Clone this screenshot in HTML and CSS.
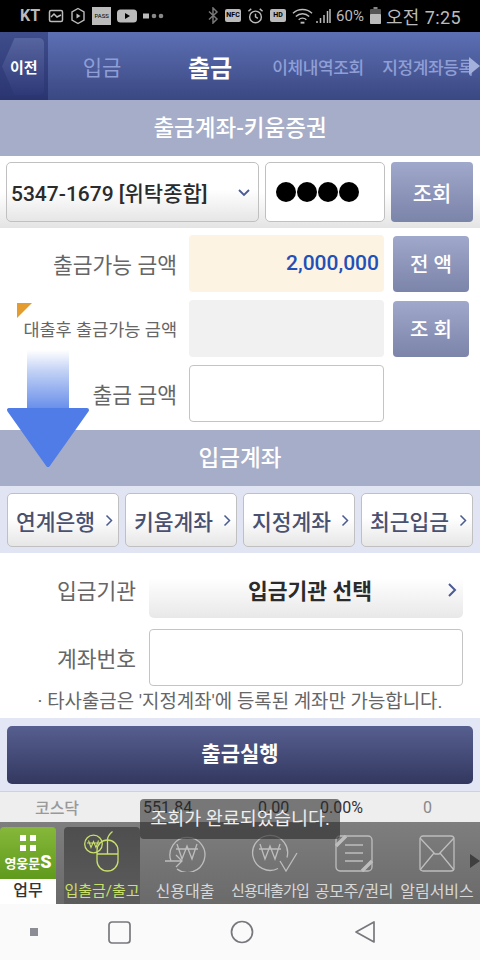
FILE: index.html
```html
<!DOCTYPE html>
<html lang="ko">
<head>
    <meta charset="UTF-8">
    <meta name="viewport" content="width=device-width, initial-scale=1.0">
    <title>출금</title>
    <link rel="stylesheet" href="styles.css">
</head>
<body>
<div class="screen">
    <!-- status bar -->
    <div class="statusbar">
        <span class="carrier">KT</span>
        <svg class="st" width="16" height="16" viewBox="0 0 16 16"><rect x="1.500" y="2.500" width="13" height="11" rx="1.500" fill="none" stroke="#bbb" stroke-width="1.500"/><path d="M3 9l3-3 3 3 4-2" fill="none" stroke="#bbb" stroke-width="1.500"/></svg>
        <svg class="st" width="16" height="18" viewBox="0 0 16 18"><path d="M8 1.500l6 3.500v8l-6 3.500L2 13V5z" fill="none" stroke="#bbb" stroke-width="1.400"/><path d="M6.500 6.500l4 2.500-4 2.500z" fill="#bbb"/></svg>
        <span class="pass">PASS</span>
        <svg class="st" width="20" height="14" viewBox="0 0 20 14"><rect width="20" height="13" y="0.500" rx="3.500" fill="#bbb"/><path d="M8 4l5 3-5 3z" fill="#000"/></svg>
        <svg class="st dots" width="21" height="8" viewBox="0 0 21 8"><rect x="0" y="1.500" width="6" height="5" fill="#bbb"/><circle cx="11" cy="4" r="2.300" fill="#888"/><circle cx="18" cy="4" r="2.300" fill="#888"/></svg>
        <span class="grow"></span>
        <svg class="st" width="11" height="17" viewBox="0 0 11 17"><path d="M1 4.500l8 7.500-4 4V1l4 4-8 7.500" fill="none" stroke="#777" stroke-width="1.500"/></svg>
        <span class="nfc">NFC</span>
        <svg class="st" width="17" height="18" viewBox="0 0 18 18"><circle cx="9" cy="10" r="6.200" fill="none" stroke="#bbb" stroke-width="1.500"/><path d="M9 6.500V10l2.500 1.500M1.500 4l3-2.500M16.500 4l-3-2.500" fill="none" stroke="#bbb" stroke-width="1.500"/></svg>
        <span class="hd">HD</span>
        <svg class="st" width="21" height="18" viewBox="0 0 22 18"><path d="M1 6a15 15 0 0 1 20 0M4 9.500a10 10 0 0 1 14 0M7 13a5.500 5.500 0 0 1 8 0" fill="none" stroke="#bbb" stroke-width="1.400"/><path d="M9 16h4" stroke="#bbb" stroke-width="2"/></svg>
        <svg class="st signal" width="15" height="16" viewBox="0 0 15 16"><path d="M1 15v-2M4.500 15v-5M8 15V7M11.500 15V3M14 15V1" stroke="#bbb" stroke-width="1.500"/></svg>
        <span class="pct">60%</span>
        <svg class="st" width="11" height="17" viewBox="0 0 11 17"><rect x="3.500" y="0" width="4" height="2" fill="#888"/><rect x="0" y="2" width="11" height="15" rx="1" fill="#555"/><rect x="0" y="7" width="11" height="10" rx="1" fill="#bbb"/></svg>
        <span class="clock">오전 7:25</span>
    </div>

    <!-- top tabs -->
    <div class="topnav">
        <div class="back"><span>이전</span></div>
        <div class="toptab off tab-a">입금</div>
        <div class="toptab on">출금</div>
        <div class="toptab off small tab-c">이체내역조회</div>
        <div class="toptab off small tab-d">지정계좌등록</div>
        <span class="more-tri"></span>
    </div>

    <div class="section">출금계좌-키움증권</div>

    <div class="account-row">
        <div class="select box">
            <span>5347-1679 [위탁종합]</span>
            <svg width="14" height="9" viewBox="0 0 14 9"><path d="M2 2l5 5 5-5" fill="none" stroke="#4a5a94" stroke-width="1.800"/></svg>
        </div>
        <div class="password box"><i></i><i></i><i></i><i></i></div>
        <div class="btn btn-query">조회</div>
    </div>

    <div class="amounts">
        <div class="amount-row">
            <label class="amount-label">출금가능 금액</label>
            <div class="field cream">2,000,000</div>
            <div class="btn btn-side">전 액</div>
        </div>
        <div class="amount-row">
            <label class="amount-label narrow">대출후 출금가능 금액</label>
            <div class="field grey"></div>
            <div class="btn btn-side">조 회</div>
        </div>
        <div class="amount-row">
            <label class="amount-label">출금 금액</label>
            <div class="field outlined"></div>
        </div>
    </div>

    <div class="section">입금계좌</div>

    <div class="shortcuts">
        <div class="shortcut box">연계은행<svg width="8" height="13" viewBox="0 0 8 13"><path d="M1.500 1.500l5 5-5 5" fill="none" stroke="#4a5a94" stroke-width="1.500"/></svg></div>
        <div class="shortcut box">키움계좌<svg width="8" height="13" viewBox="0 0 8 13"><path d="M1.500 1.500l5 5-5 5" fill="none" stroke="#4a5a94" stroke-width="1.500"/></svg></div>
        <div class="shortcut box">지정계좌<svg width="8" height="13" viewBox="0 0 8 13"><path d="M1.500 1.500l5 5-5 5" fill="none" stroke="#4a5a94" stroke-width="1.500"/></svg></div>
        <div class="shortcut box">최근입금<svg width="8" height="13" viewBox="0 0 8 13"><path d="M1.500 1.500l5 5-5 5" fill="none" stroke="#4a5a94" stroke-width="1.500"/></svg></div>
    </div>

    <div class="deposit">
        <div class="deposit-row">
            <label class="deposit-label">입금기관</label>
            <div class="bank-select">
                <span>입금기관 선택</span>
                <svg width="11" height="16" viewBox="0 0 11 16"><path d="M2 2l6 6-6 6" fill="none" stroke="#4a5a94" stroke-width="2"/></svg>
            </div>
        </div>
        <div class="deposit-row">
            <label class="deposit-label">계좌번호</label>
            <div class="account-input"></div>
        </div>
        <p class="note">· 타사출금은 '지정계좌'에 등록된 계좌만 가능합니다.</p>
    </div>

    <div class="submit-wrap">
        <div class="submit">출금실행</div>
    </div>

    <div class="ticker">
        <span class="t-name">코스닥</span>
        <span class="t-val">551.84</span>
        <span class="t-chg">0.00</span>
        <span class="t-pct">0.00%</span>
        <span class="t-vol">0</span>
    </div>

    <!-- bottom menu -->
    <div class="menu">
        <div class="tile">
            <div class="tile-top">
                <span class="tile-grid"><i></i><i></i><i></i><i></i></span>
                <span class="tile-name">영웅문<b>S</b></span>
            </div>
            <div class="tile-label">업무</div>
        </div>
        <div class="menu-item active item-1">
            <svg width="36" height="41" viewBox="0 0 36 41" fill="none" stroke="#c9e06a" stroke-width="1.300">
                <circle cx="9.500" cy="13" r="8.800"/>
                <path d="M4.500 9.500l2.500 7 2.500-6 2.500 6 2.500-7M3 12h13" stroke-width="1.100"/>
                <rect x="13" y="9" width="21" height="31" rx="10.500"/>
                <path d="M13 23h21M23.500 9v14M23.500 9c0-4 2.500-6.500 5-8.500"/>
            </svg>
            <span>입출금/출고</span>
        </div>
        <div class="menu-item item-2">
            <svg width="42" height="38" viewBox="0 0 42 38" fill="none" stroke="#bdbdbd" stroke-width="1.300">
                <path d="M7 27a17.500 17.500 0 1 1 6 8"/>
                <path d="M13 10l5 15 5-13 5 13 5-15M12 15h22"/>
                <path d="M1 27h17M12 21l6 6-6 6"/>
            </svg>
            <span>신용대출</span>
        </div>
        <div class="menu-item item-3">
            <svg class="shift" width="48" height="38" viewBox="0 0 48 38" fill="none" stroke="#bdbdbd" stroke-width="1.300">
                <path d="M27 34.500a17.500 17.500 0 1 1 9-11"/>
                <path d="M9 10l5 15 5-13 5 13 5-15M8 15h22"/>
                <path d="M29 27l6 10 11-18"/>
            </svg>
            <span>신용대출가입</span>
        </div>
        <div class="menu-item item-4">
            <svg width="38" height="37" viewBox="0 0 38 37" fill="none" stroke="#bdbdbd" stroke-width="1.300">
                <rect x="1" y="1" width="36" height="35" rx="4"/>
                <path d="M10 10h18M10 18h18M10 26h18"/>
                <path d="M1 11L11 1M27 36l10-10" stroke-width="3.500"/>
            </svg>
            <span>공모주/권리</span>
        </div>
        <div class="menu-item item-5">
            <svg width="36" height="37" viewBox="0 0 36 37" fill="none" stroke="#bdbdbd" stroke-width="1.300">
                <rect x="1" y="1" width="34" height="35" rx="3"/>
                <path d="M1 3l15 16h4L35 3M1 35l14-17M35 35L21 18"/>
            </svg>
            <span>알림서비스</span>
        </div>
        <span class="menu-tri"></span>
    </div>

    <!-- android nav -->
    <div class="navbar">
        <svg class="nav-dot" width="8" height="8" viewBox="0 0 8 8"><rect width="8" height="8" fill="#8c8c94"/></svg>
        <svg class="nav-square" width="23" height="23" viewBox="0 0 23 23"><rect x="1" y="1" width="21" height="21" rx="3" fill="none" stroke="#77777d" stroke-width="1.700"/></svg>
        <svg class="nav-circle" width="24" height="24" viewBox="0 0 24 24"><circle cx="12" cy="12" r="10.500" fill="none" stroke="#77777d" stroke-width="1.700"/></svg>
        <svg class="nav-back" width="22" height="24" viewBox="0 0 22 24"><path d="M2 12L20 2v20z" fill="none" stroke="#77777d" stroke-width="1.700" stroke-linejoin="round"/></svg>
    </div>

    <!-- overlays -->
    <svg class="big-arrow" width="84" height="118" viewBox="0 0 84 118">
        <defs>
            <linearGradient id="shaft" x1="0" y1="0" x2="0" y2="1">
                <stop offset="0" stop-color="#ffffff"/>
                <stop offset="0.350" stop-color="#c4d3f5"/>
                <stop offset="1" stop-color="#6a90ea"/>
            </linearGradient>
        </defs>
        <rect x="21" y="0" width="42" height="58" fill="url(#shaft)"/>
        <path d="M3 60h78L42 115z" fill="#507ce8" stroke="#507ce8" stroke-width="4" stroke-linejoin="round"/>
    </svg>
    <span class="corner"></span>
    <div class="toast">조회가 완료되었습니다.</div>
</div>
</body>
</html>
```

FILE: styles.css
```css
* {
    box-sizing: border-box;
}
body {
    margin: 0;
    font-family: Roboto, "Noto Sans CJK KR", sans-serif;
    color: #333;
}
.screen {
    position: relative;
    width: 480px;
    height: 960px;
    overflow: hidden;
    background: #fff;
}
.statusbar {
    display: flex;
    align-items: center;
    height: 32px;
    padding: 0 19px 1px 20px;
    gap: 6px;
    background: #000;
    color: #bbb;
    font-size: 16px;
}
.grow {
    flex: 1;
}
.carrier {
    font-weight: 700;
    font-size: 16px;
    margin-right: 2px;
}
.pass {
    width: 19px;
    height: 18px;
    background: #bbb;
    color: #000;
    font-size: 6px;
    line-height: 18px;
    text-align: center;
    overflow: hidden;
}
.nfc, .hd {
    background: #bbb;
    color: #000;
    font-weight: 700;
    border-radius: 2px;
    font-size: 7px;
    line-height: 13px;
    height: 13px;
    width: 16px;
    text-align: center;
    overflow: hidden;
}
.signal {
    margin-left: -3px;
}
.pct {
    font-size: 15px;
    margin-left: -1px;
}
.clock {
    font-size: 18px;
    letter-spacing: 0.4px;
    margin-left: -1px;
}
.st {
    flex: none;
}

.topnav {
    position: relative;
    display: flex;
    align-items: center;
    height: 68px;
    background: linear-gradient(#5d70b4, #3a4782);
    overflow: hidden;
}
.back {
    position: relative;
    width: 48px;
    height: 68px;
    background: linear-gradient(#3f4d8c, #2a3570);
    display: flex;
    align-items: center;
    padding-left: 10px;
    color: #fff;
    font-weight: 700;
    font-size: 15px;
}
.back::before {
    content: "";
    position: absolute;
    left: 2px;
    top: 6px;
    width: 42px;
    height: 57px;
    border-radius: 5px;
    background: linear-gradient(#56649f, #2e3a78);
    clip-path: polygon(30% 0, 100% 0, 100% 100%, 30% 100%, 0 50%);
}
.back span {
    position: relative;
}
.toptab {
    text-align: center;
    white-space: nowrap;
    font-size: 21px;
}
.toptab.on {
    width: 108px;
    color: #fff;
    font-weight: 700;
    font-size: 24px;
}
.toptab.off {
    color: #8f9fd6;
}
.toptab.small {
    font-size: 17px;
    font-weight: 500;
    letter-spacing: -0.4px;
}
.tab-a {
    width: 108px;
}
.tab-c {
    width: 108px;
}
.tab-d {
    width: 94px;
    margin-left: 9px;
}
.more-tri {
    position: absolute;
    right: 0;
    top: 25px;
    border-left: 11px solid #a4b0dc;
    border-top: 9px solid transparent;
    border-bottom: 9px solid transparent;
}

.section {
    height: 56px;
    line-height: 56px;
    background: #a6adc8;
    color: #fff;
    font-size: 22.500px;
    font-weight: 500;
    text-align: center;
}

.box {
    border: 1px solid #c0c0c0;
    border-radius: 5px;
    background: linear-gradient(#fff 45%, #e6e6e6);
}
.account-row {
    display: flex;
    height: 72px;
    padding: 6px 7px 6px 6px;
    gap: 6px;
    background: linear-gradient(#fff 50%, #e4e4e4);
}
.select {
    width: 253px;
    display: flex;
    align-items: center;
    justify-content: space-between;
    padding: 0 7px 0 4px;
    font-size: 21px;
    font-weight: 500;
    color: #2b2b2b;
    white-space: nowrap;
}
.password {
    width: 120px;
    background: #fff;
    display: flex;
    align-items: center;
    gap: 1px;
    padding-left: 10px;
}
.password i {
    width: 20px;
    height: 20px;
    border-radius: 50%;
    background: #000;
}
.btn {
    background: linear-gradient(#a0a8cb, #7b84a9);
    color: #fff;
    border-radius: 4px;
    font-weight: 500;
    display: flex;
    align-items: center;
    justify-content: center;
    font-size: 21px;
}
.btn-query {
    width: 82px;
}
.btn-side {
    width: 76px;
    height: 56px;
    margin-left: 9px;
    font-size: 20px;
}

.amounts {
    height: 202px;
    padding-top: 7px;
}
.amount-row {
    display: flex;
    align-items: center;
    height: 57px;
    margin-bottom: 8px;
}
.amount-row:nth-child(3) {
    margin-top: 1px;
}
.amount-label {
    width: 177px;
    text-align: right;
    font-size: 21.500px;
    color: #666;
    white-space: nowrap;
}
.amount-label.narrow {
    font-size: 17.500px;
}
.field {
    width: 195px;
    height: 100%;
    margin-left: 12px;
    border-radius: 4px;
    font-size: 21px;
    font-weight: 500;
    text-align: right;
    line-height: 56px;
    padding-right: 5px;
}
.cream {
    background: #fdf3e3;
    color: #2250b8;
}
.grey {
    background: #f1f1f1;
}
.outlined {
    border: 1px solid #c4c4c4;
}

.shortcuts {
    display: flex;
    gap: 6px;
    height: 67px;
    padding: 7px 7px 6px;
    background: #e1e5f3;
}
.shortcut {
    flex: 1;
    display: flex;
    align-items: center;
    justify-content: space-between;
    padding: 0 5px 0 8px;
    font-size: 21.500px;
    font-weight: 500;
    color: #4a5170;
    white-space: nowrap;
}

.deposit {
    height: 165px;
    padding-top: 8px;
}
.deposit-row {
    display: flex;
    align-items: center;
    height: 57px;
    margin-bottom: 11px;
}
.deposit-label {
    width: 136px;
    text-align: right;
    font-size: 21.500px;
    color: #666;
}
.bank-select {
    width: 314px;
    height: 100%;
    margin-left: 13px;
    border-radius: 5px;
    display: flex;
    align-items: center;
    justify-content: space-between;
    padding: 0 5px 0 99px;
    font-size: 21.500px;
    font-weight: 700;
    color: #2b2b2b;
    background: linear-gradient(#fff 30%, #e8e8e8);
}
.account-input {
    width: 314px;
    height: 100%;
    margin-left: 13px;
    border: 1px solid #c4c4c4;
    border-radius: 4px;
}
.note {
    margin: -7px 0 0;
    text-align: center;
    font-size: 18.900px;
    line-height: 24px;
    color: #666;
    white-space: nowrap;
}

.submit-wrap {
    height: 74px;
    padding: 8px 7px;
    background: #e3e7f5;
    border-bottom: 1px solid #cfd2de;
}
.submit {
    height: 58px;
    line-height: 56px;
    border-radius: 5px;
    background: linear-gradient(#575f90, #32385f);
    color: #fff;
    font-size: 21px;
    font-weight: 700;
    text-align: center;
}

.ticker {
    display: grid;
    grid-template-columns: 143px 115px 62px 103px 1fr;
    align-items: center;
    height: 30px;
    background: #eeeeee;
    font-size: 16px;
    color: #333;
}
.t-name {
    width: 114px;
    text-align: center;
    color: #999;
    font-weight: 500;
}
.t-vol {
    color: #888;
}

.menu {
    display: flex;
    align-items: flex-end;
    position: relative;
    height: 82px;
    background: linear-gradient(#7e7e7e, #6a6a6a);
}
.tile {
    width: 56px;
    height: 77px;
    border-radius: 4px 4px 0 0;
    overflow: hidden;
    flex: none;
}
.tile-top {
    height: 52px;
    background: linear-gradient(#86b83a, #5f9a1c);
    display: flex;
    flex-direction: column;
    align-items: center;
    padding-top: 8px;
}
.tile-grid {
    display: grid;
    grid-template-columns: 6px 6px;
    gap: 4px;
}
.tile-grid i {
    width: 6px;
    height: 6px;
    background: #fff;
}
.tile-name {
    color: #fff;
    font-weight: 700;
    font-size: 13px;
    line-height: 20px;
    margin-top: 1px;
    white-space: nowrap;
}
.tile-name b {
    font-size: 18px;
}
.tile-label {
    height: 25px;
    background: #fff;
    color: #333;
    text-align: center;
    font-size: 16px;
    font-weight: 500;
    line-height: 24px;
}
.menu-item {
    height: 77px;
    display: flex;
    flex-direction: column;
    align-items: center;
    justify-content: flex-end;
    color: #d8d8d8;
    font-size: 16px;
    white-space: nowrap;
    flex: none;
}
.menu-item span {
    line-height: 25px;
}
.menu-item svg {
    margin-bottom: 7px;
}
.menu-item svg.shift {
    margin-left: 10px;
}
.menu-item.active {
    margin-left: 8px;
    width: 76px;
    background: linear-gradient(#4e4e4e, #5c5c5c);
    border-radius: 4px 4px 0 0;
    color: #c9e06a;
    font-size: 15px;
}
.item-2 {
    width: 90px;
}
.item-3 {
    width: 80px;
    font-size: 15px;
    letter-spacing: -0.800px;
}
.item-4 {
    width: 88px;
    letter-spacing: -0.300px;
}
.item-5 {
    width: 78px;
}
.menu-tri {
    position: absolute;
    right: 0;
    top: 32px;
    border-left: 10px solid #3f3f3f;
    border-top: 7px solid transparent;
    border-bottom: 7px solid transparent;
}

.navbar {
    display: flex;
    align-items: center;
    height: 56px;
    background: #fafafa;
}
.nav-dot {
    margin-left: 30px;
}
.nav-square {
    margin-left: 70px;
}
.nav-circle {
    margin-left: 99px;
}
.nav-back {
    margin-left: 100px;
}

.big-arrow {
    position: absolute;
    left: 6px;
    top: 350px;
}
.corner {
    position: absolute;
    left: 17px;
    top: 303px;
    border-top: 15px solid #e49c2e;
    border-right: 15px solid transparent;
}
.toast {
    position: absolute;
    left: 140px;
    top: 799px;
    width: 200px;
    height: 40px;
    border-radius: 4px;
    background: rgba(40, 40, 40, 0.6);
    color: #eee;
    font-size: 18.500px;
    line-height: 40px;
    text-align: center;
    white-space: nowrap;
}
```
